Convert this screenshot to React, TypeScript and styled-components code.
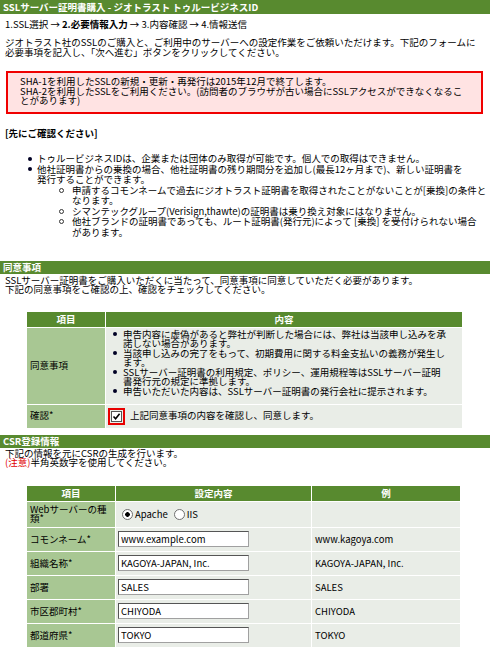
import styled, { createGlobalStyle } from "styled-components";

const GREEN = "#588a2f";
const LABEL = "#a8c793";
const CELL = "#e9ede7";

const GlobalStyle = createGlobalStyle`
  html, body {
    margin: 0;
    padding: 0;
    background: #fff;
  }
  body {
    font-family: "Noto Sans CJK JP", "Noto Sans", sans-serif;
    font-size: 9.5px;
    color: #000;
  }
`;

const Page = styled.div`
  width: 490px;
  white-space: nowrap;
`;

const TitleBar = styled.h1`
  margin: 0;
  height: 14px;
  padding: 0 3px;

  font-size: 9.5px;
  font-weight: 700;
  line-height: 14px;
  color: #fff;
  background: ${GREEN};
`;

const Steps = styled.div`
  margin: 5px 5px 0;
  line-height: 10px;

  strong {
    font-weight: 700;
  }
`;

const Lead = styled.p`
  margin: 9px 5px 0;
  line-height: 9.5px;
`;

const Notice = styled.div`
  margin: 14px 7px 0 6px;
  padding: 4px 12px 6px;
  line-height: 9.5px;

  background: #ffe3e3;
  border: 2px solid #f00000;
`;

const NoteHeading = styled.div`
  margin: 14px 5px 0;
  line-height: 10px;
  font-weight: 700;
`;

const BulletList = styled.ul`
  margin: 15.75px 0 0;
  padding: 0 0 0 26px;
  list-style: none;
  line-height: 10.5px;
`;

const SubList = styled.ul`
  margin: 0;
  padding: 0 0 0 22px;
  list-style: none;
`;

const Item = styled.li<{ $hollow?: boolean; $lh?: number }>`
  display: flex;

  &::before {
    content: "";
    flex: none;
    box-sizing: border-box;
    width: ${({ $hollow }) => ($hollow ? "5px" : "4px")};
    height: ${({ $hollow }) => ($hollow ? "5px" : "4px")};
    margin: ${({ $hollow, $lh = 10.5 }) =>
      $hollow ? `${($lh - 5) / 2}px 8px 0 0` : `${($lh - 4) / 2}px 5px 0 2px`};
    border-radius: 50%;
    background: ${({ $hollow }) => ($hollow ? "#fff" : "#000024")};
    border: ${({ $hollow }) => ($hollow ? "1px solid #333" : "none")};
  }
`;

const ItemText = styled.div`
  flex: 1;
`;

const SectionBar = styled.h2<{ $top?: number }>`
  margin: ${({ $top = 24 }) => $top}px 0 0;
  height: 13px;
  padding: 0 3px;

  font-size: 9.5px;
  font-weight: 700;
  line-height: 13px;
  color: #fff;
  background: ${GREEN};
`;

const SectionText = styled.p`
  margin: 1.25px 5px 0;
  line-height: 9.5px;
`;

const Caution = styled.span`
  color: #e00000;
`;

const Table = styled.table<{ $top: number; $width: number }>`
  width: ${({ $width }) => $width}px;
  margin: ${({ $top }) => $top}px 0 0 26px;
  border-collapse: separate;
  border-spacing: 1px;
  table-layout: fixed;
  background: #fff;
`;

const HeadCell = styled.th`
  height: 15px;
  padding: 0;

  font-weight: 700;
  line-height: 15px;
  text-align: center;
  color: #fff;
  background: ${GREEN};
`;

const LabelCell = styled.td<{ $h?: number }>`
  height: ${({ $h = 23 }) => $h}px;
  padding: 0 3px;
  line-height: 9.5px;
  vertical-align: middle;
  background: ${LABEL};
`;

const BodyCell = styled.td<{ $pad?: string; $top?: boolean }>`
  padding: ${({ $pad = "0 3px" }) => $pad};
  line-height: 9.5px;
  vertical-align: ${({ $top }) => ($top ? "top" : "middle")};
  background: ${CELL};
`;

const AgreeList = styled.ul`
  margin: 0;
  padding: 0 0 0 7px;
  list-style: none;
  line-height: 9.5px;

  li::before {
    margin-right: 6px;
    margin-left: 0;
  }
`;

const ConfirmLabel = styled.label`
  display: flex;
  align-items: center;
  gap: 5px;
`;

const CheckFrame = styled.span`
  box-sizing: border-box;
  display: flex;
  align-items: center;
  justify-content: center;
  width: 17px;
  height: 17px;
  border: 2px solid #e80000;
`;

const CheckBox = styled.span`
  box-sizing: border-box;
  display: flex;
  align-items: center;
  justify-content: center;
  width: 11px;
  height: 11px;
  background: #fff;
  border: 1px solid #555;
`;

const RadioGroup = styled.div`
  display: flex;
  align-items: center;
  padding-left: 6px;
`;

const RadioLabel = styled.label`
  display: flex;
  align-items: center;
  gap: 2px;
  margin-right: 6px;
`;

const Radio = styled.input`
  appearance: none;
  box-sizing: border-box;
  width: 11px;
  height: 11px;
  margin: 0;
  border: 1px solid #707070;
  border-radius: 50%;
  background: #fff;

  &:checked {
    background: radial-gradient(circle, #000 0 2px, #fff 2.6px);
  }
`;

const TextInput = styled.input`
  box-sizing: border-box;
  display: block;
  width: 131px;
  height: 16px;
  margin: 0;
  padding: 0 2px;

  font-family: inherit;
  font-size: 9.5px;
  color: #000;
  background: #fff;
  border: 1px solid #a0a0a0;
  border-top-color: #555;
  border-left-color: #555;
`;

const csrRows = [
  { label: "コモンネーム*", value: "www.example.com", example: "www.kagoya.com" },
  { label: "組織名称*", value: "KAGOYA-JAPAN, Inc.", example: "KAGOYA-JAPAN, Inc." },
  { label: "部署", value: "SALES", example: "SALES" },
  { label: "市区郡町村*", value: "CHIYODA", example: "CHIYODA" },
  { label: "都道府県*", value: "TOKYO", example: "TOKYO" },
];

export default function App() {
  return (
    <Page>
      <GlobalStyle />
      <TitleBar>SSLサーバー証明書購入 - ジオトラスト トゥルービジネスID</TitleBar>
      <Steps>
        1.SSL選択 → <strong>2.必要情報入力</strong> → 3.内容確認 → 4.情報送信
      </Steps>
      <Lead>
        ジオトラスト社のSSLのご購入と、ご利用中のサーバーへの設定作業をご依頼いただけます。下記のフォームに
        <br />
        必要事項を記入し、「次へ進む」ボタンをクリックしてください。
      </Lead>
      <Notice>
        SHA-1を利用したSSLの新規・更新・再発行は2015年12月で終了します。
        <br />
        SHA-2を利用したSSLをご利用ください。(訪問者のブラウザが古い場合にSSLアクセスができなくなるこ
        <br />
        とがあります)
      </Notice>

      <NoteHeading>[先にご確認ください]</NoteHeading>
      <BulletList>
        <Item>
          <ItemText>トゥルービジネスIDは、企業または団体のみ取得が可能です。個人での取得はできません。</ItemText>
        </Item>
        <Item>
          <ItemText>
            他社証明書からの乗換の場合、他社証明書の残り期間分を追加し(最長12ヶ月まで)、新しい証明書を
            <br />
            発行することができます。
            <SubList>
              <Item $hollow>
                <ItemText>
                  申請するコモンネームで過去にジオトラスト証明書を取得されたことがないことが[乗換]の条件と
                  <br />
                  なります。
                </ItemText>
              </Item>
              <Item $hollow>
                <ItemText>シマンテックグループ(Verisign,thawte)の証明書は乗り換え対象にはなりません。</ItemText>
              </Item>
              <Item $hollow>
                <ItemText>
                  他社ブランドの証明書であっても、ルート証明書(発行元)によって [乗換] を受付けられない場合
                  <br />
                  があります。
                </ItemText>
              </Item>
            </SubList>
          </ItemText>
        </Item>
      </BulletList>

      <SectionBar>同意事項</SectionBar>
      <SectionText>
        SSLサーバー証明書をご購入いただくに当たって、同意事項に同意していただく必要があります。
        <br />
        下記の同意事項をご確認の上、確認をチェックしてください。
      </SectionText>
      <Table $top={16} $width={437}>
        <colgroup>
          <col style={{ width: 78 }} />
          <col style={{ width: 356 }} />
        </colgroup>
        <thead>
          <tr>
            <HeadCell>項目</HeadCell>
            <HeadCell>内容</HeadCell>
          </tr>
        </thead>
        <tbody>
          <tr>
            <LabelCell $h={76}>同意事項</LabelCell>
            <BodyCell $top $pad="2px 0 7px">
              <AgreeList>
                <Item $lh={9.5}>
                  <ItemText>
                    申告内容に虚偽があると弊社が判断した場合には、弊社は当該申し込みを承
                    <br />
                    諾しない場合があります。
                  </ItemText>
                </Item>
                <Item $lh={9.5}>
                  <ItemText>
                    当該申し込みの完了をもって、初期費用に関する料金支払いの義務が発生し
                    <br />
                    ます。
                  </ItemText>
                </Item>
                <Item $lh={9.5}>
                  <ItemText>
                    SSLサーバー証明書の利用規定、ポリシー、運用規程等はSSLサーバー証明
                    <br />
                    書発行元の規定に準拠します。
                  </ItemText>
                </Item>
                <Item $lh={9.5}>
                  <ItemText>申告いただいた内容は、SSLサーバー証明書の発行会社に提示されます。</ItemText>
                </Item>
              </AgreeList>
            </BodyCell>
          </tr>
          <tr>
            <LabelCell>確認*</LabelCell>
            <BodyCell $pad="0 2px">
              <ConfirmLabel>
                <CheckFrame>
                  <CheckBox>
                    <svg width="9" height="9" viewBox="0 0 9 9">
                      <path d="M1.5 4.5 L3.6 6.8 L7.6 1.8" fill="none" stroke="#000" strokeWidth="1.6" />
                    </svg>
                  </CheckBox>
                </CheckFrame>
                上記同意事項の内容を確認し、同意します。
              </ConfirmLabel>
            </BodyCell>
          </tr>
        </tbody>
      </Table>

      <SectionBar $top={6}>CSR登録情報</SectionBar>
      <SectionText>
        下記の情報を元にCSRの生成を行います。
        <br />
        <Caution>(注意)</Caution>半角英数字を使用してください。
      </SectionText>
      <Table $top={17} $width={435}>
        <colgroup>
          <col style={{ width: 88 }} />
          <col style={{ width: 195 }} />
          <col style={{ width: 148 }} />
        </colgroup>
        <thead>
          <tr>
            <HeadCell>項目</HeadCell>
            <HeadCell>設定内容</HeadCell>
            <HeadCell>例</HeadCell>
          </tr>
        </thead>
        <tbody>
          <tr>
            <LabelCell $h={25}>
              Webサーバーの種
              <br />
              類*
            </LabelCell>
            <BodyCell $pad="0">
              <RadioGroup>
                <RadioLabel>
                  <Radio type="radio" name="server" defaultChecked />
                  Apache
                </RadioLabel>
                <RadioLabel>
                  <Radio type="radio" name="server" />
                  IIS
                </RadioLabel>
              </RadioGroup>
            </BodyCell>
            <BodyCell />
          </tr>
          {csrRows.map((row) => (
            <tr key={row.label}>
              <LabelCell>{row.label}</LabelCell>
              <BodyCell $pad="0 2px">
                <TextInput type="text" defaultValue={row.value} />
              </BodyCell>
              <BodyCell>{row.example}</BodyCell>
            </tr>
          ))}
        </tbody>
      </Table>
    </Page>
  );
}
